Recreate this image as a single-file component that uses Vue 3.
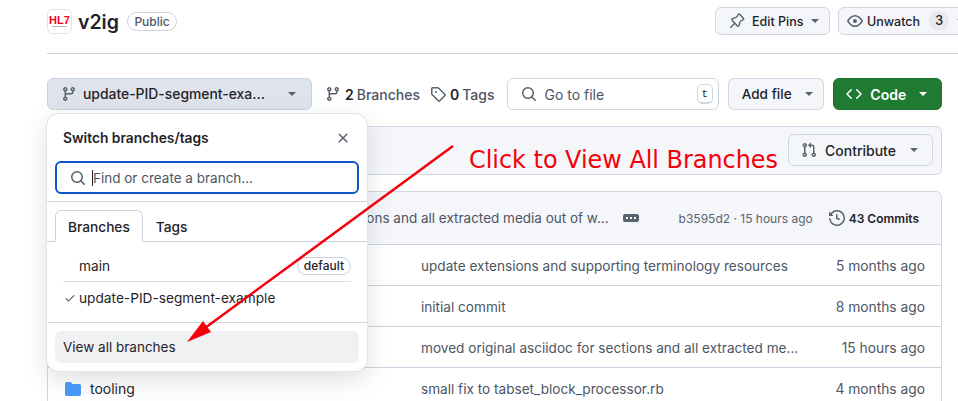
<template>
  <div class="page">
    <header class="repo-head">
      <div class="repo-title">
        <div class="avatar">
          <span class="hl7">HL7</span>
          <span class="hl7-sub"></span>
        </div>
        <strong class="repo-name">v2ig</strong>
        <span class="badge">Public</span>
      </div>
      <div class="repo-actions">
        <button class="btn pins">
          <svg class="pin" width="16" height="16" viewBox="0 0 16 16"><path d="M10.8 1.6l3.6 3.6a1 1 0 0 1-.3 1.6l-1.3.6a3.8 3.8 0 0 0-2.1 2.6l-.6 2.4a1 1 0 0 1-1.7.5L3.1 7.2a1 1 0 0 1 .5-1.7l2.4-.6a3.8 3.8 0 0 0 2.6-2.1l.6-1.3a1 1 0 0 1 1.6-.3ZM5.5 10.5l-4.2 4.2" /></svg>
          Edit Pins
          <span class="caret"></span>
        </button>
        <button class="btn watch">
          <svg class="icon" width="16" height="16" viewBox="0 0 16 16"><path :d="icons.eye" /></svg>
          Unwatch
          <span class="counter">3</span>
          <span class="caret"></span>
        </button>
      </div>
    </header>

    <div class="toolbar">
      <button class="btn branch-btn">
        <svg class="icon" width="16" height="16" viewBox="0 0 16 16"><path :d="icons.branch" /></svg>
        <span class="branch-name">update-PID-segment-exa...</span>
        <span class="caret"></span>
      </button>
      <div class="counts">
        <span class="count">
          <svg class="icon" width="16" height="16" viewBox="0 0 16 16"><path :d="icons.branch" /></svg>
          <b>2</b> Branches
        </span>
        <span class="count">
          <svg class="icon" width="16" height="16" viewBox="0 0 16 16"><path :d="icons.tag" /></svg>
          <b>0</b> Tags
        </span>
      </div>
      <div class="goto">
        <svg class="icon" width="16" height="16" viewBox="0 0 16 16"><path :d="icons.search" /></svg>
        <span class="goto-text">Go to file</span>
        <kbd>t</kbd>
      </div>
      <button class="btn add-file">Add file <span class="caret"></span></button>
      <button class="btn code">
        <svg width="16" height="16" viewBox="0 0 16 16"><path :d="icons.code" /></svg>
        Code
        <span class="caret"></span>
      </button>
    </div>

    <div class="contribute-bar">
      <button class="btn contribute">
        <svg class="icon" width="16" height="16" viewBox="0 0 16 16"><path :d="icons.pull" /></svg>
        Contribute
        <span class="caret"></span>
      </button>
    </div>

    <div class="files">
      <div class="commit-head">
        <span class="commit-msg">sections and all extracted media out of w...</span>
        <span class="more"><i></i><i></i><i></i></span>
        <span class="commit-sha">b3595d2 · 15 hours ago</span>
        <span class="commits">
          <svg class="icon" width="16" height="16" viewBox="0 0 16 16"><path :d="icons.history" /></svg>
          43 Commits
        </span>
      </div>
      <div v-for="row in rows" :key="row.msg" class="file-row">
        <span class="file-name">
          <svg v-if="row.name" class="folder" width="16" height="16" viewBox="0 0 16 16"><path :d="icons.folder" /></svg>
          {{ row.name }}
        </span>
        <span class="file-msg">{{ row.msg }}</span>
        <span class="file-age">{{ row.age }}</span>
      </div>
    </div>

    <div class="popup">
      <div class="popup-title">
        <span>Switch branches/tags</span>
        <svg class="icon" width="16" height="16" viewBox="0 0 16 16"><path :d="icons.close" /></svg>
      </div>
      <div class="popup-search">
        <svg class="icon" width="16" height="16" viewBox="0 0 16 16"><path :d="icons.search" /></svg>
        <span class="cursor"></span>
        <span>Find or create a branch...</span>
      </div>
      <div class="tabs">
        <span class="tab active">Branches</span>
        <span class="tab">Tags</span>
      </div>
      <div class="branch-list">
        <div class="branch-row">
          <span class="check"></span>
          <span class="branch-label">main</span>
          <span class="default">default</span>
        </div>
        <div class="branch-row">
          <svg class="check icon" width="12" height="12" viewBox="0 0 16 16"><path :d="icons.check" /></svg>
          <span class="branch-label">update-PID-segment-example</span>
        </div>
      </div>
      <div class="popup-foot">
        <div class="view-all">View all branches</div>
      </div>
    </div>

    <svg class="arrow" width="958" height="401" viewBox="0 0 958 401">
      <line x1="453" y1="146" x2="205" y2="328" stroke="#f5000a" stroke-width="2.5" />
      <polygon points="187,342 203,321 211,332" fill="#f5000a" />
    </svg>
    <div class="note">Click to View All Branches</div>
  </div>
</template>

<script setup>
const icons = {
  eye: 'M8 2c1.981 0 3.671.992 4.933 2.078 1.27 1.091 2.187 2.345 2.637 3.023a1.62 1.62 0 0 1 0 1.798c-.45.678-1.367 1.932-2.637 3.023C11.67 13.008 9.981 14 8 14c-1.981 0-3.671-.992-4.933-2.078C1.797 10.83.88 9.576.43 8.898a1.62 1.62 0 0 1 0-1.798c.45-.677 1.367-1.931 2.637-3.022C4.33 2.992 6.019 2 8 2ZM1.679 7.932a.12.12 0 0 0 0 .136c.411.622 1.241 1.75 2.366 2.717C5.176 11.758 6.527 12.5 8 12.5c1.473 0 2.825-.742 3.955-1.715 1.124-.967 1.954-2.096 2.366-2.717a.12.12 0 0 0 0-.136c-.412-.621-1.242-1.75-2.366-2.717C10.824 4.242 9.473 3.5 8 3.5c-1.473 0-2.825.742-3.955 1.715-1.124.967-1.954 2.096-2.366 2.717ZM8 10a2 2 0 1 1-.001-3.999A2 2 0 0 1 8 10Z',
  branch: 'M9.5 3.25a2.25 2.25 0 1 1 3 2.122V6A2.5 2.5 0 0 1 10 8.5H6a1 1 0 0 0-1 1v1.128a2.251 2.251 0 1 1-1.5 0V5.372a2.25 2.25 0 1 1 1.5 0v1.836A2.493 2.493 0 0 1 6 7h4a1 1 0 0 0 1-1v-.628A2.25 2.25 0 0 1 9.5 3.25Zm-6 0a.75.75 0 1 0 1.5 0 .75.75 0 0 0-1.5 0Zm8.25-.75a.75.75 0 1 0 0 1.5.75.75 0 0 0 0-1.5ZM4.25 12a.75.75 0 1 0 0 1.5.75.75 0 0 0 0-1.5Z',
  tag: 'M1 7.775V2.75C1 1.784 1.784 1 2.75 1h5.025c.464 0 .91.184 1.238.513l6.25 6.25a1.75 1.75 0 0 1 0 2.474l-5.026 5.026a1.75 1.75 0 0 1-2.474 0l-6.25-6.25A1.752 1.752 0 0 1 1 7.775Zm1.5 0c0 .066.026.13.073.177l6.25 6.25a.25.25 0 0 0 .354 0l5.025-5.025a.25.25 0 0 0 0-.354l-6.25-6.25a.25.25 0 0 0-.177-.073H2.75a.25.25 0 0 0-.25.25ZM6 5a1 1 0 1 1 0 2 1 1 0 0 1 0-2Z',
  search: 'M10.68 11.74a6 6 0 0 1-7.922-8.982 6 6 0 0 1 8.982 7.922l3.04 3.04a.749.749 0 0 1-.326 1.275.749.749 0 0 1-.734-.215ZM11.5 7a4.499 4.499 0 1 0-8.997 0A4.499 4.499 0 0 0 11.5 7Z',
  close: 'M3.72 3.72a.75.75 0 0 1 1.06 0L8 6.94l3.22-3.22a.749.749 0 0 1 1.275.326.749.749 0 0 1-.215.734L9.06 8l3.22 3.22a.749.749 0 0 1-.326 1.275.749.749 0 0 1-.734-.215L8 9.06l-3.22 3.22a.751.751 0 0 1-1.042-.018.751.751 0 0 1-.018-1.042L6.94 8 3.72 4.78a.75.75 0 0 1 0-1.06Z',
  check: 'M13.78 4.22a.75.75 0 0 1 0 1.06l-7.25 7.25a.75.75 0 0 1-1.06 0L2.22 9.28a.751.751 0 0 1 .018-1.042.751.751 0 0 1 1.042-.018L6 10.94l6.72-6.72a.75.75 0 0 1 1.06 0Z',
  code: 'm11.28 3.22 4.25 4.25a.75.75 0 0 1 0 1.06l-4.25 4.25a.749.749 0 0 1-1.275-.326.749.749 0 0 1 .215-.734L13.94 8l-3.72-3.72a.749.749 0 0 1 .326-1.275.749.749 0 0 1 .734.215Zm-6.56 0a.751.751 0 0 1 1.042.018.751.751 0 0 1 .018 1.042L2.06 8l3.72 3.72a.749.749 0 0 1-.326 1.275.749.749 0 0 1-.734-.215L.47 8.53a.75.75 0 0 1 0-1.06Z',
  pull: 'M1.5 3.25a2.25 2.25 0 1 1 3 2.122v5.256a2.251 2.251 0 1 1-1.5 0V5.372A2.25 2.25 0 0 1 1.5 3.25Zm5.677-.177L9.573.677A.25.25 0 0 1 10 .854V2.5h1A2.5 2.5 0 0 1 13.5 5v5.628a2.251 2.251 0 1 1-1.5 0V5a1 1 0 0 0-1-1h-1v1.646a.25.25 0 0 1-.427.177L7.177 3.427a.25.25 0 0 1 0-.354ZM3.75 2.5a.75.75 0 1 0 0 1.5.75.75 0 0 0 0-1.5Zm0 9.5a.75.75 0 1 0 0 1.5.75.75 0 0 0 0-1.5Zm8.25.75a.75.75 0 1 0 1.5 0 .75.75 0 0 0-1.5 0Z',
  history: 'm.427 1.927 1.215 1.215a8.002 8.002 0 1 1-1.6 5.685.75.75 0 1 1 1.493-.154 6.5 6.5 0 1 0 1.18-4.458l1.358 1.358A.25.25 0 0 1 3.896 6H.25A.25.25 0 0 1 0 5.75V2.104a.25.25 0 0 1 .427-.177ZM7.75 4a.75.75 0 0 1 .75.75v2.992l2.028.812a.75.75 0 0 1-.557 1.392l-2.5-1A.751.751 0 0 1 7 8.25v-3.5A.75.75 0 0 1 7.75 4Z',
  folder: 'M1.75 1A1.75 1.75 0 0 0 0 2.75v10.5C0 14.216.784 15 1.75 15h12.5A1.75 1.75 0 0 0 16 13.25v-8.5A1.75 1.75 0 0 0 14.25 3H7.5a.25.25 0 0 1-.2-.1l-.9-1.2C6.07 1.26 5.55 1 5 1H1.75Z',
}

// names of the first three rows sit under the popup
const rows = [
  { name: '', msg: 'update extensions and supporting terminology resources', age: '5 months ago' },
  { name: '', msg: 'initial commit', age: '8 months ago' },
  { name: '', msg: 'moved original asciidoc for sections and all extracted me...', age: '15 hours ago' },
  { name: 'tooling', msg: 'small fix to tabset_block_processor.rb', age: '4 months ago' },
]
</script>

<style>
html,
body {
  margin: 0;
  height: 401px;
  overflow: hidden;
  background: #fff;
}
</style>

<style scoped>
.page {
  position: relative;
  width: 958px;
  height: 401px;
  overflow: hidden;
  padding-left: 47px;
  box-sizing: border-box;
  font-family: Inter, "Liberation Sans", sans-serif;
  font-size: 14px;
  color: #1f2328;
}

.icon {
  fill: #59636e;
  flex: none;
}

.repo-head {
  display: flex;
  justify-content: space-between;
  width: 921px;
  height: 54px;
  box-sizing: border-box;
  padding-top: 7px;
  border-bottom: 1px solid #c9d3df;
}

.repo-title {
  display: flex;
  align-items: center;
  height: 29px;
}

.avatar {
  width: 25px;
  height: 25px;
  box-sizing: border-box;
  border: 1px solid #dfe3e8;
  border-radius: 6px;
  display: flex;
  flex-direction: column;
  align-items: center;
  justify-content: center;
}

.hl7 {
  font-family: "Liberation Sans", sans-serif;
  font-weight: 700;
  font-size: 11px;
  line-height: 9px;
  color: #f0001e;
}

.hl7-sub {
  width: 15px;
  height: 1px;
  margin-top: 1px;
  background: #b5b5b5;
}

.repo-name {
  margin-left: 6px;
  font-size: 19.5px;
  font-weight: 600;
}

.badge {
  margin-left: 8px;
  padding: 0 6.5px;
  height: 19px;
  line-height: 18px;
  box-sizing: border-box;
  border: 1px solid #c9d3df;
  border-radius: 10px;
  font-size: 12px;
  font-weight: 500;
  color: #4c5563;
}

.repo-actions {
  display: flex;
  gap: 8px;
}

.btn {
  display: flex;
  align-items: center;
  font: inherit;
  font-weight: 500;
  text-align: left;
  color: #1f2328;
  background: #f4f6fa;
  border: 1px solid #d0d7e2;
  border-radius: 6px;
  box-sizing: border-box;
  padding: 0;
  cursor: pointer;
}

.caret {
  width: 0;
  height: 0;
  border-left: 4px solid transparent;
  border-right: 4px solid transparent;
  border-top: 4px solid #59636e;
  flex: none;
}

.pins {
  width: 115px;
  height: 28px;
  padding-left: 13px;
  font-size: 12.5px;
}

.pin {
  fill: none;
  stroke: #59636e;
  stroke-width: 1.4;
  margin-right: 7px;
}

.pins .caret {
  margin-left: 8px;
}

.watch {
  width: 130px;
  height: 28px;
  padding-left: 8px;
  font-size: 12.5px;
}

.watch .icon {
  margin-right: 4px;
}

.counter {
  margin-left: 9px;
  width: 20px;
  height: 20px;
  line-height: 20px;
  text-align: center;
  border-radius: 10px;
  background: #e7e9ec;
}

.watch .caret {
  margin-left: 8px;
}

.toolbar {
  display: flex;
  align-items: center;
  margin-top: 24px;
  width: 895px;
  height: 32px;
}

.branch-btn {
  width: 266px;
  height: 32px;
  padding-left: 13px;
  background: #dfe4ec;
  border-color: #c9d3df;
}

.branch-name {
  margin-left: 6px;
  width: 205px;
  font-size: 13.9px;
}

.counts {
  display: flex;
  gap: 10px;
  margin-left: 13px;
  color: #4c5563;
}

.count {
  display: flex;
  align-items: center;
  gap: 3px;
  font-weight: 500;
}

.count b {
  color: #1f2328;
  font-weight: 600;
  margin-left: 1px;
}

.goto {
  margin-left: 13px;
  width: 212px;
  height: 32px;
  box-sizing: border-box;
  border: 1px solid #d0d7e2;
  border-radius: 6px;
  display: flex;
  align-items: center;
  padding: 0 5px 0 13px;
}

.goto-text {
  margin-left: 7px;
  flex: 1;
  color: #4c5563;
}

kbd {
  width: 16px;
  height: 20px;
  line-height: 18px;
  box-sizing: border-box;
  text-align: center;
  border: 1px solid #d0d7e2;
  border-bottom-width: 2px;
  border-radius: 5px;
  font-family: "Liberation Mono", monospace;
  font-size: 11px;
}

.add-file {
  margin-left: 9px;
  width: 97px;
  height: 32px;
  padding-left: 13px;
  font-size: 13.6px;
}

.add-file .caret {
  margin-left: 13px;
}

.code {
  margin-left: 9px;
  width: 109px;
  height: 32px;
  padding-left: 12px;
  color: #fff;
  font-weight: 600;
  background: #1f7a32;
  border-color: #1c7030;
}

.code svg {
  fill: #fff;
  margin-right: 8px;
}

.code .caret {
  margin-left: 13px;
  border-top-color: #fff;
}

.contribute-bar {
  display: flex;
  justify-content: flex-end;
  align-items: flex-start;
  width: 895px;
  height: 49px;
  margin-top: 16px;
  padding: 7px 8px 0 0;
  box-sizing: border-box;
  background: #f4f6fa;
  border: 1px solid #d0d7e2;
  border-radius: 6px;
}

.contribute {
  width: 145px;
  height: 32px;
  padding-left: 12px;
}

.contribute .icon {
  margin-right: 8px;
}

.contribute .caret {
  margin-left: 14px;
}

.files {
  width: 895px;
  margin-top: 16px;
  box-sizing: border-box;
  border: 1px solid #d0d7e2;
  border-radius: 6px 6px 0 0;
}

.commit-head {
  display: flex;
  align-items: center;
  height: 52px;
  padding-right: 22px;
  background: #f4f6fa;
  border-radius: 6px 6px 0 0;
  font-size: 12px;
}

.commit-msg {
  flex: 1;
  text-align: right;
  font-size: 13.5px;
  color: #4c5563;
  white-space: nowrap;
}

.more {
  margin-left: 14px;
  width: 16px;
  height: 8px;
  background: #59636e;
  border-radius: 2px;
  display: flex;
  align-items: center;
  justify-content: center;
  gap: 2px;
}

.more i {
  width: 2px;
  height: 2px;
  background: #f4f6fa;
}

.commit-sha {
  margin-left: 40px;
  color: #59636e;
}

.commits {
  display: flex;
  align-items: center;
  gap: 4px;
  margin-left: 16px;
  font-weight: 600;
}

.file-row {
  display: flex;
  align-items: center;
  height: 41px;
  box-sizing: border-box;
  border-top: 1px solid #c9d3df;
  padding: 1px 16px 0 17px;
}

.file-name {
  display: flex;
  align-items: center;
  gap: 9px;
  width: 356px;
  flex: none;
}

.folder {
  fill: #4a9bfa;
}

.file-msg {
  flex: 1;
  color: #4c5563;
  font-size: 13.6px;
}

.file-age {
  color: #4c5563;
  font-size: 13.8px;
}

/* dropdown over the file list */
.popup {
  position: absolute;
  left: 47px;
  top: 114px;
  width: 320px;
  height: 257px;
  box-sizing: border-box;
  background: #fff;
  border-radius: 12px;
  box-shadow: 0 0 0 1px #dfe4ec, 0 8px 24px rgba(66, 74, 83, 0.18);
  z-index: 2;
}

.popup-title {
  display: flex;
  justify-content: space-between;
  align-items: center;
  height: 47px;
  padding: 0 16px;
  font-size: 13.8px;
  font-weight: 600;
}

.popup-search {
  display: flex;
  align-items: center;
  margin: 0 8px;
  height: 33px;
  box-sizing: border-box;
  padding-left: 13px;
  border: 2px solid #0a55c8;
  border-radius: 6px;
  color: #4c5563;
  font-size: 13.5px;
}

.cursor {
  width: 1px;
  height: 16px;
  margin: 0 0 0 6px;
  background: #1f2328;
}

.tabs {
  display: flex;
  margin-top: 7px;
  padding: 8px 8px 0;
  height: 31px;
  box-sizing: content-box;
  border-top: 1px solid #d0d7e2;
  border-bottom: 1px solid #c9d3df;
}

.tab {
  display: flex;
  align-items: center;
  height: 32px;
  box-sizing: border-box;
  padding: 1px 13px 0;
  font-size: 13.7px;
  font-weight: 500;
}

.tab.active {
  padding: 1px 12px 0;
  background: #fff;
  border: 1px solid #c9d3df;
  border-bottom: 1px solid #fff;
  border-radius: 6px 6px 0 0;
}

.branch-list {
  padding: 0 16px;
  height: 81px;
  box-sizing: border-box;
  border-bottom: 1px solid #d0d7e2;
}

.branch-row {
  display: flex;
  align-items: center;
  height: 32px;
  font-size: 13.7px;
}

.branch-row:first-child {
  height: 40px;
  padding-top: 8px;
  box-sizing: border-box;
  border-bottom: 1px solid #d9dfe7;
}

.check {
  width: 12px;
  margin-right: 3px;
  margin-left: 1px;
  flex: none;
}

.branch-label {
  flex: 1;
}

.default {
  height: 18px;
  line-height: 16px;
  box-sizing: border-box;
  padding: 0 6px;
  border: 1px solid #c9d3df;
  border-radius: 9px;
  font-size: 12px;
  font-weight: 500;
}

.popup-foot {
  padding: 8px;
}

.view-all {
  height: 32px;
  line-height: 32px;
  padding-left: 8px;
  background: #eff1f3;
  border-radius: 6px;
  font-size: 13.5px;
}

.arrow {
  position: absolute;
  left: 0;
  top: 0;
  z-index: 3;
  pointer-events: none;
}

.note {
  position: absolute;
  left: 469px;
  top: 145px;
  z-index: 3;
  font-family: "DejaVu Sans", sans-serif;
  font-size: 23.9px;
  line-height: 30px;
  color: #f5000a;
  white-space: nowrap;
}
</style>
